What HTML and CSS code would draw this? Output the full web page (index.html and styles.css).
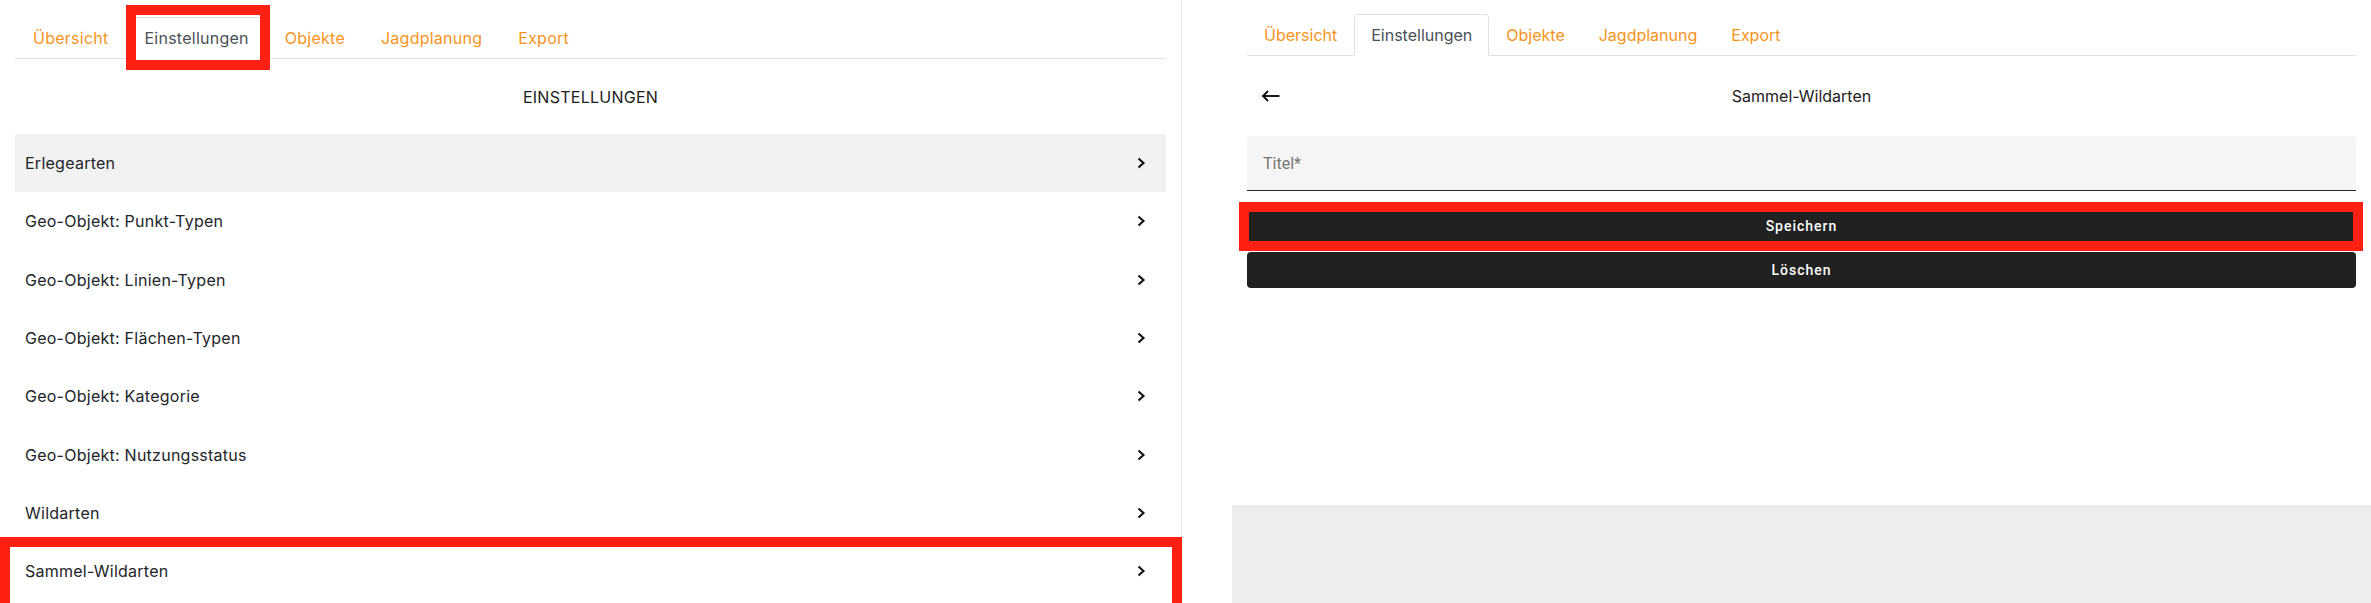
FILE: index.html
```html
<!DOCTYPE html>
<html>

<head>
  <title>Einstellungen</title>
  <link rel="stylesheet" href="styles.css">
</head>

<body>
  <div class="page">
    <section class="screen screen-list">
      <ul class="tabs">
        <li><a class="tab">Übersicht</a></li>
        <li><a class="tab active">Einstellungen</a></li>
        <li><a class="tab">Objekte</a></li>
        <li><a class="tab">Jagdplanung</a></li>
        <li><a class="tab">Export</a></li>
      </ul>
      <h2 class="list-title">EINSTELLUNGEN</h2>
      <ul class="menu">
        <li class="menu-item hover"><span>Erlegearten</span><svg class="chevron" viewBox="0 0 9 12"><polyline points="1.5,1.5 6.5,6 1.5,10.5"/></svg></li>
        <li class="menu-item"><span>Geo-Objekt: Punkt-Typen</span><svg class="chevron" viewBox="0 0 9 12"><polyline points="1.5,1.5 6.5,6 1.5,10.5"/></svg></li>
        <li class="menu-item"><span>Geo-Objekt: Linien-Typen</span><svg class="chevron" viewBox="0 0 9 12"><polyline points="1.5,1.5 6.5,6 1.5,10.5"/></svg></li>
        <li class="menu-item"><span>Geo-Objekt: Flächen-Typen</span><svg class="chevron" viewBox="0 0 9 12"><polyline points="1.5,1.5 6.5,6 1.5,10.5"/></svg></li>
        <li class="menu-item"><span>Geo-Objekt: Kategorie</span><svg class="chevron" viewBox="0 0 9 12"><polyline points="1.5,1.5 6.5,6 1.5,10.5"/></svg></li>
        <li class="menu-item"><span>Geo-Objekt: Nutzungsstatus</span><svg class="chevron" viewBox="0 0 9 12"><polyline points="1.5,1.5 6.5,6 1.5,10.5"/></svg></li>
        <li class="menu-item"><span>Wildarten</span><svg class="chevron" viewBox="0 0 9 12"><polyline points="1.5,1.5 6.5,6 1.5,10.5"/></svg></li>
        <li class="menu-item"><span>Sammel-Wildarten</span><svg class="chevron" viewBox="0 0 9 12"><polyline points="1.5,1.5 6.5,6 1.5,10.5"/></svg></li>
      </ul>
      <div class="mark mark-tab"></div>
      <div class="mark mark-row"></div>
    </section>

    <section class="screen screen-form">
      <div class="app">
        <ul class="tabs">
          <li><a class="tab">Übersicht</a></li>
          <li><a class="tab active">Einstellungen</a></li>
          <li><a class="tab">Objekte</a></li>
          <li><a class="tab">Jagdplanung</a></li>
          <li><a class="tab">Export</a></li>
        </ul>
        <div class="form-head">
          <button class="back">
            <svg viewBox="0 0 19 12"><line x1="2" y1="6" x2="18.5" y2="6"/><polyline points="7,1 2,6 7,11"/></svg>
          </button>
          <h2 class="form-title">Sammel-Wildarten</h2>
          <span></span>
        </div>
        <div class="field">
          <input type="text" placeholder="Titel*">
        </div>
        <button class="btn btn-save">Speichern</button>
        <button class="btn">Löschen</button>
        <div class="mark mark-save"></div>
      </div>
      <div class="backdrop"></div>
    </section>
  </div>
</body>

</html>
```

FILE: styles.css
```css
html,
body {
  margin: 0;
  height: 603px;
  overflow: hidden;
  background: #fff;
  font-family: Inter, "Noto Sans", sans-serif;
  font-size: 16px;
  color: #212529;
}

.page {
  display: flex;
  height: 603px;
}

.screen {
  position: relative;
}

/* left screenshot: settings list */

.screen-list {
  width: 1151px;
  padding: 17px 15px 0;
  border-right: 1px solid #e8e8e8;
  letter-spacing: 0.25px;
}

.tabs {
  display: flex;
  list-style: none;
  margin: 0;
  padding: 0;
  border-bottom: 1px solid #dee2e6;
}

.tab {
  display: block;
  padding: 8px 17px;
  margin-bottom: -1px;
  line-height: 24px;
  color: #f7941d;
  border: 1px solid transparent;
  border-radius: 4px 4px 0 0;
}

.screen-form .tab {
  padding: 8px 16px;
}

.tab.active {
  color: #495057;
  background: #fff;
  border-color: #dee2e6 #dee2e6 #fff;
}

.list-title {
  margin: 0;
  height: 75px;
  display: flex;
  align-items: center;
  justify-content: center;
  font-size: 16px;
  font-weight: 400;
  color: #1d1d1d;
}

.menu {
  list-style: none;
  margin: 0;
  padding: 0;
}

.menu-item {
  height: 58.3px;
  display: flex;
  align-items: center;
  justify-content: space-between;
  padding: 0 20px 0 10px;
}

.menu-item.hover {
  background: #f2f2f2;
}

.chevron {
  width: 9px;
  height: 12px;
  fill: none;
  stroke: #111;
  stroke-width: 2.1;
}

/* red annotation frames */

.mark {
  position: absolute;
  box-sizing: border-box;
  border: 10px solid #ff2014;
}

.mark-tab {
  left: 126px;
  top: 5px;
  width: 144px;
  height: 65px;
}

.mark-row {
  left: 0;
  top: 537px;
  width: 1182px;
  height: 66px;
  border-bottom-width: 0;
}

/* right screenshot: edit form */

.screen-form {
  margin-left: 50px;
  width: 1139px;
  display: flex;
  flex-direction: column;
}

.app {
  position: relative;
  height: 505px;
  padding: 14px 15px 0;
  box-sizing: border-box;
}

.form-head {
  height: 80px;
  display: grid;
  grid-template-columns: 1fr auto 1fr;
  align-items: center;
}

.back {
  justify-self: start;
  margin-left: 14px;
  padding: 0;
  border: none;
  background: none;
  display: flex;
}

.back svg {
  width: 19px;
  height: 12px;
  fill: none;
  stroke: #111;
  stroke-width: 1.9;
}

.form-title {
  margin: 0;
  font-size: 16px;
  font-weight: 400;
  color: #1d1d1d;
}

.field {
  height: 54px;
  background: #f5f5f5;
  border-radius: 4px 4px 0 0;
  border-bottom: 1px solid #2a2a2a;
  display: flex;
  align-items: center;
}

.field input {
  width: 100%;
  border: none;
  background: none;
  padding: 0 16px;
  font-family: Roboto, "Noto Sans", sans-serif;
  font-size: 16px;
  outline: none;
}

.field input::placeholder {
  color: #767676;
}

.btn {
  display: block;
  width: 100%;
  height: 36px;
  margin-top: 8px;
  border: none;
  border-radius: 4px;
  background: #212121;
  color: #fff;
  font-family: Roboto, "Noto Sans", sans-serif;
  font-size: 14px;
  font-weight: 500;
  letter-spacing: 1px;
}

.btn-save {
  margin-top: 17px;
}

.mark-save {
  left: 7px;
  top: 202px;
  width: 1124px;
  height: 49px;
}

.backdrop {
  flex: 1;
  background: #ededed;
}
```
